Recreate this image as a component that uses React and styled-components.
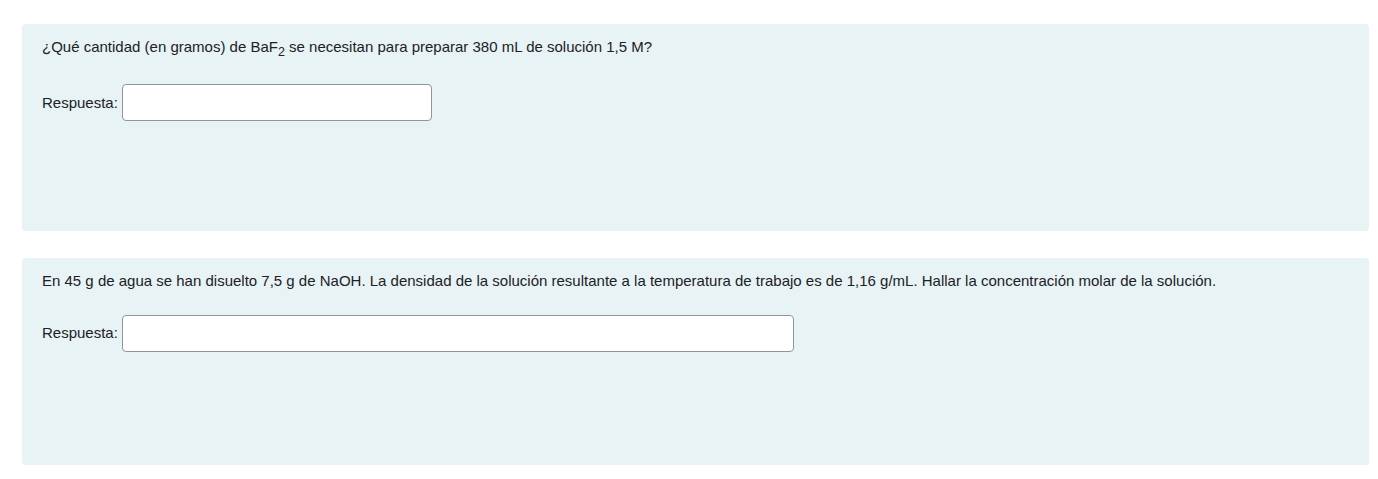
import React from "react";
import styled, { createGlobalStyle } from "styled-components";

const GlobalStyle = createGlobalStyle`
  body {
    margin: 0;
    background: #fff;
    font-family: "Liberation Sans", Arial, sans-serif;
    font-size: 15px;
    line-height: 1.5;
    color: #1d2125;
  }
`;

const Page = styled.div`
  display: flex;
  flex-direction: column;
  gap: 27px;
  padding: 24px 9px 0 22px;
`;

const Formulation = styled.div`
  box-sizing: border-box;
  min-height: 207px;
  padding: 12px 20px;
  background: #e7f3f5;
  border-radius: 4px;
`;

const QText = styled.p`
  margin: 0;
`;

const AnswerRow = styled.div`
  display: flex;
  align-items: center;
  gap: 4px;
  margin-top: 22.5px;
`;

const Label = styled.label`
  white-space: nowrap;
`;

const Input = styled.input`
  box-sizing: border-box;
  width: ${(p) => p.$width}px;
  height: 37px;
  padding: 6px 12px;
  border: 1px solid #8f959e;
  border-radius: 4px;
  background: #fff;
  font: inherit;
  color: inherit;
  outline: none;
`;

const questions = [
  {
    id: 1,
    text: (
      <>
        ¿Qué cantidad (en gramos) de BaF<sub>2</sub> se necesitan para preparar
        380 mL de solución 1,5 M?
      </>
    ),
    width: 310,
  },
  {
    id: 2,
    text: "En 45 g de agua se han disuelto 7,5 g de NaOH. La densidad de la solución resultante a la temperatura de trabajo es de 1,16 g/mL. Hallar la concentración molar de la solución.",
    width: 672,
  },
];

export default function App() {
  return (
    <>
      <GlobalStyle />
      <Page>
        {questions.map((q) => (
          <Formulation key={q.id}>
            <QText>{q.text}</QText>
            <AnswerRow>
              <Label htmlFor={`ans-${q.id}`}>Respuesta:</Label>
              <Input id={`ans-${q.id}`} type="text" $width={q.width} />
            </AnswerRow>
          </Formulation>
        ))}
      </Page>
    </>
  );
}
